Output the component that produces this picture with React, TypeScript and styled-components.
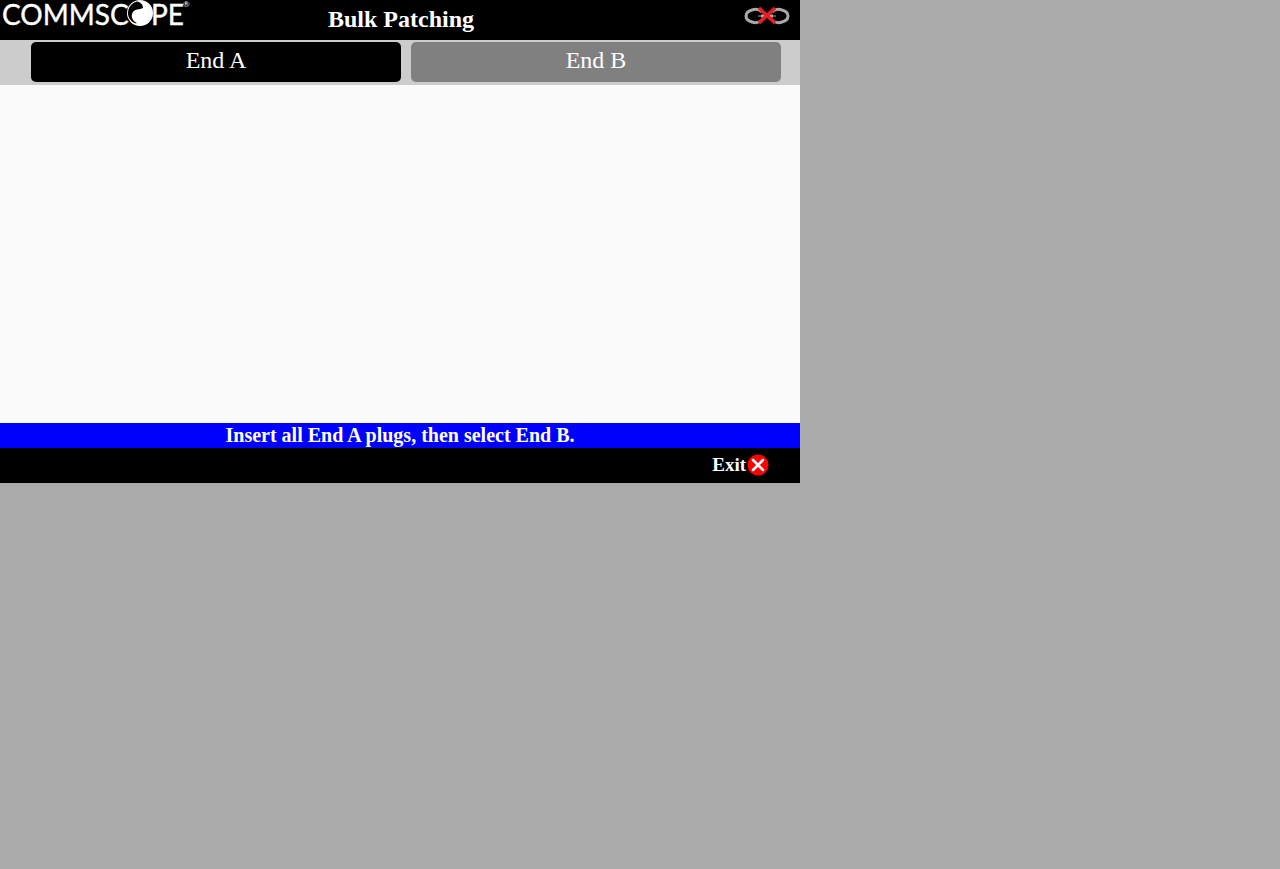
import React from "react";
import styled, { createGlobalStyle } from "styled-components";

const GlobalStyle = createGlobalStyle`
  body {
    margin: 0;
    background: #aaa;
    color: #fff;
    font-family: "Liberation Serif", "Times New Roman", serif;
  }
`;

const Screen = styled.main`
  display: flex;
  flex-direction: column;
  max-width: 800px;
`;

const Header = styled.header`
  display: grid;
  grid-template-columns: 1fr auto 1fr;
  height: 40px;
  padding-left: 2px;
  background: #000;
`;

const Logo = styled.svg`
  display: block;
  width: 196px;
  height: 36px;
  fill: #fff;
  font-family: Lato, sans-serif;
  font-size: 28px;
`;

const Wordmark = styled.text`
  stroke: #fff;
  stroke-width: 0.4px;
`;

const Registered = styled.text`
  font-size: 8px;
`;

const Title = styled.h1`
  margin: 0;
  font-size: 24px;
  line-height: 38px;
`;

const LinkStatus = styled.svg`
  justify-self: end;
  width: 46px;
  height: 20px;
  margin: 6px 10px 0 0;
  fill: none;
`;

const Tabs = styled.div`
  display: flex;
  gap: 10px;
  padding: 2px 19px 3px 31px;
  background: #ccc;
`;

const Tab = styled.button<{ $active?: boolean }>`
  flex: 1;
  height: 40px;
  padding: 0 0 4px;
  border: 0;
  border-radius: 5px;
  background: ${({ $active }) => ($active ? "#000" : "#808080")};
  color: #fff;
  font: 24px/36px "Liberation Serif", "Times New Roman", serif;
`;

const PlugList = styled.section`
  min-height: 338px;
  background: #fafafa;
`;

const Message = styled.p`
  margin: 0;
  background: #00f;
  font-size: 20px;
  font-weight: bold;
  line-height: 25px;
  text-align: center;
`;

const Footer = styled.footer`
  display: flex;
  justify-content: flex-end;
  box-sizing: border-box;
  height: 35px;
  padding: 0 31px 2px 0;
  background: #000;
`;

const ExitButton = styled.button`
  display: flex;
  align-items: center;
  gap: 1px;
  padding: 0;
  border: 0;
  background: none;
  color: #fff;
  font: bold 19px/32px "Liberation Serif", "Times New Roman", serif;
`;

const ExitIcon = styled.svg`
  width: 22px;
  height: 22px;
`;

function CommScopeLogo() {
  return (
    <Logo viewBox="0 0 196 36" role="img" aria-label="CommScope">
      <Wordmark x="0" y="25">COMMSC</Wordmark>
      <circle cx="138" cy="13" r="13" />
      <path
        d="M136 1.5C130 3 127 8 127 13C127 18 130 22 135 23.5C139 22 138 18 137 16C136 12 141 12 142 8C142 4 139 2 136 1.5Z"
        fill="#000"
        transform="translate(-1 0)"
      />
      <path d="M136 23.5C131 22 129 17 130 14C132 8 138 10 141 8C144 13 142 20 136 23.5Z" />
      <Wordmark x="149" y="25">PE</Wordmark>
      <Registered x="181" y="7">®</Registered>
    </Logo>
  );
}

export default function App() {
  return (
    <>
      <GlobalStyle />
      <Screen>
        <Header>
          <CommScopeLogo />
          <Title>Bulk Patching</Title>
          <LinkStatus viewBox="0 0 46 20" role="img" aria-label="Disconnected">
            <g stroke="#a9a9a9" strokeWidth="3">
              <path d="M18 6C15 3 11 3 8 4C4 5 2 7 2 10C2 13 4 15 8 16C11 17 15 17 18 14" />
              <path d="M28 6C31 3 35 3 38 4C42 5 44 7 44 10C44 13 42 15 38 16C35 17 31 17 28 14" />
              <path d="M14 10H32" strokeWidth="1" />
              <path d="M17 10H20M26 10H29" />
            </g>
            <path d="M15 2L31 17M31 2L15 17" stroke="#ed1c24" strokeWidth="3.5" />
          </LinkStatus>
        </Header>
        <Tabs>
          <Tab type="button" $active aria-pressed="true">End A</Tab>
          <Tab type="button" aria-pressed="false">End B</Tab>
        </Tabs>
        <PlugList aria-label="Plugs" />
        <Message role="status">Insert all End A plugs, then select End B.</Message>
        <Footer>
          <ExitButton type="button">
            Exit
            <ExitIcon viewBox="0 0 22 22" aria-hidden="true">
              <circle cx="11" cy="11" r="10.5" fill="#f00" />
              <path d="M6 6L16 16M16 6L6 16" stroke="#fff" strokeWidth="2.5" strokeLinecap="round" />
            </ExitIcon>
          </ExitButton>
        </Footer>
      </Screen>
    </>
  );
}
